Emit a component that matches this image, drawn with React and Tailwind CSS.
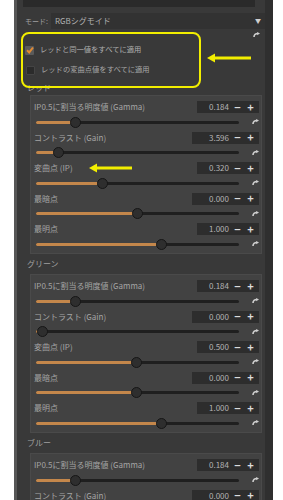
import React from "react";

const font = { fontFamily: '"Noto Sans CJK JP", "Noto Sans", sans-serif' };

const groups = [
  {
    title: "レッド",
    rows: [
      { label: "IP0.5に割当る明度値 (Gamma)", value: "0.184", pos: 19.7 },
      { label: "コントラスト (Gain)", value: "3.596", pos: 11.3, wide: true },
      { label: "変曲点 (IP)", value: "0.320", pos: 33, arrow: true },
      { label: "最暗点", value: "0.000", pos: 49.8, wide: true },
      { label: "最明点", value: "1.000", pos: 61.6 },
    ],
  },
  {
    title: "グリーン",
    rows: [
      { label: "IP0.5に割当る明度値 (Gamma)", value: "0.184", pos: 19.7 },
      { label: "コントラスト (Gain)", value: "0.000", pos: 3, wide: true },
      { label: "変曲点 (IP)", value: "0.500", pos: 49.3 },
      { label: "最暗点", value: "0.000", pos: 49.3, wide: true },
      { label: "最明点", value: "1.000", pos: 61.6 },
    ],
  },
  {
    title: "ブルー",
    rows: [
      { label: "IP0.5に割当る明度値 (Gamma)", value: "0.184", pos: 19.7 },
      { label: "コントラスト (Gain)", value: "0.000", pos: 3, wide: true },
    ],
  },
];

function ResetIcon() {
  return (
    <svg width="7" height="6" viewBox="0 0 7 6">
      <path d="M1 5 C1 2.5 2.5 1.5 5 1.5" stroke="#cfcfcf" strokeWidth="1.6" fill="none" />
      <path d="M4.2 0 L7 1.6 L4.2 3.2 Z" fill="#cfcfcf" />
    </svg>
  );
}

function YellowArrow({ width }) {
  return (
    <svg width={width} height="10" viewBox={`0 0 ${width} 10`}>
      <path d={`M6 5 L${width} 5`} stroke="#f2ee00" strokeWidth="3" />
      <path d="M0 5 L8 0.5 L8 9.5 Z" fill="#f2ee00" />
    </svg>
  );
}

function Row({ row }) {
  return (
    <div className="flex flex-col">
      <div className="flex items-center justify-between h-[16px] relative">
        <span className="text-[8px] text-[#a5a5a5] leading-none pl-[2px]">{row.label}</span>
        {row.arrow && (
          <div className="absolute left-[57px] top-[3px]">
            <YellowArrow width={43} />
          </div>
        )}
        <div className="flex items-center h-[12px] bg-[#2d2d2d] mr-[1px]">
          <span
            className={`${row.wide ? "w-[39px]" : "w-[34px]"} text-right pr-[2px] text-[8px] text-[#b4b4b4] leading-none`}
          >
            {row.value}
          </span>
          <span className="w-[13px] text-center text-[11px] text-[#dcdcdc] leading-none font-bold">−</span>
          <span className="w-[13px] text-center text-[11px] text-[#dcdcdc] leading-none font-bold">+</span>
          <span className="w-[2px]" />
        </div>
      </div>
      <div className="flex items-center h-[14.5px]">
        <div className="ml-[4px] w-[203px] h-[3px] bg-[#1f1f1f] rounded-full relative">
          <div className="absolute left-0 top-0 h-[3px] bg-[#c4874b] rounded-full" style={{ width: `${row.pos}%` }} />
          <div
            className="absolute top-[-4px] w-[11px] h-[11px] -ml-[5.5px] rounded-full bg-[#2e2e2e] border border-[#161616]"
            style={{ left: `${row.pos}%` }}
          />
        </div>
        <div className="ml-[13px]">
          <ResetIcon />
        </div>
      </div>
    </div>
  );
}

export default function App() {
  return (
    <div className="w-[283px] h-[500px] bg-white overflow-hidden" style={font}>
      <div className="ml-[14px] w-[259px] h-full bg-[#393939] border-l-[3px] border-l-[#575757] border-r-[8px] border-r-[#2f2f2f] flex flex-col relative">
        {/* top strip */}
        <div className="ml-[6px] w-[232px] h-[7px] bg-[#2a2a2a] shrink-0" />

        {/* mode */}
        <div className="flex items-center h-[16px] mt-[6px] shrink-0">
          <span className="ml-[8px] mr-[3px] whitespace-nowrap text-[7px] text-[#a0a0a0] leading-none">モード:</span>
          <div className="flex-1 h-full bg-[#323232] flex items-center justify-between px-[4px]">
            <span className="text-[8px] text-[#b0b0b0] leading-none">RGBシグモイド</span>
            <span className="text-[6px] text-[#cfcfcf] leading-none">▼</span>
          </div>
        </div>

        {/* checkboxes */}
        <div className="h-[52px] shrink-0 relative flex flex-col">
          <div className="flex justify-end pr-[5px] pt-[3px] h-[12px]">
            <ResetIcon />
          </div>
          <div className="flex items-center gap-[6px] ml-[8px] h-[10px] mt-[4px]">
            <div className="w-[9px] h-[9px] bg-[#5a5a5a] rounded-[1px] flex items-center justify-center">
              <svg width="8" height="8" viewBox="0 0 8 8">
                <path d="M1 4.2 L3.2 6.4 L7 1.5" stroke="#e08a35" strokeWidth="2" fill="none" />
              </svg>
            </div>
            <span className="text-[7.3px] text-[#b0b0b0] leading-none">レッドと同一値をすべてに適用</span>
          </div>
          <div className="flex items-center gap-[6px] ml-[9px] h-[10px] mt-[10px]">
            <div className="w-[9px] h-[9px] bg-[#2b2b2b] border border-[#444] rounded-[1px]" />
            <span className="text-[7.3px] text-[#a8a8a8] leading-none">レッドの変曲点値をすべてに適用</span>
          </div>
        </div>

        {groups.map((g, gi) => (
          <div key={g.title} className="flex flex-col shrink-0">
            <div className={`${gi === 0 ? "h-[14px]" : "h-[20.5px]"} flex items-center pl-[10px]`}>
              <span className="text-[8px] text-[#a0a0a0] leading-none">{g.title}</span>
            </div>
            <div className="ml-[13px] mr-[3px] bg-[#424242] border border-[#4a4a4a] pt-[3px] pb-[1px] px-[1px]">
              {g.rows.map((r, i) => (
                <Row key={i} row={r} />
              ))}
            </div>
          </div>
        ))}

        {/* annotation box */}
        <div className="absolute left-[4px] top-[32px] w-[180px] h-[56px] border-2 border-[#f2ee00] rounded-[8px]" />
        <div className="absolute left-[190px] top-[53px]">
          <YellowArrow width={44} />
        </div>
      </div>
    </div>
  );
}
